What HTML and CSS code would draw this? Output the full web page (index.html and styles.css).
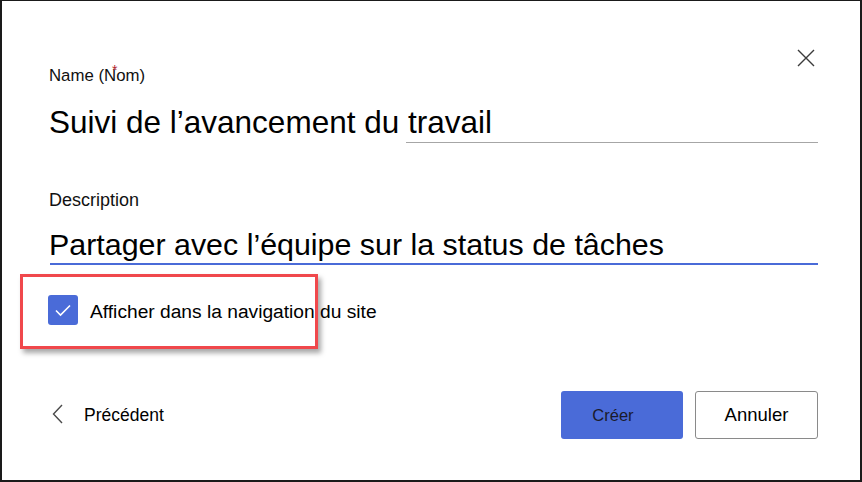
FILE: index.html
```html
<!DOCTYPE html>
<html lang="fr">
<head>
<meta charset="utf-8">
<title>Créer une liste</title>
<link rel="stylesheet" href="styles.css">
</head>
<body>
<div class="dialog">
  <button class="close" aria-label="Fermer">
    <svg width="18" height="18" viewBox="0 0 18 18"><path d="M1 1 L17 17 M17 1 L1 17" stroke="#3b3b3b" stroke-width="1.4" fill="none"/></svg>
  </button>

  <div class="field-label name-label">Name (Nom)<span class="req">*</span></div>
  <div class="field-value">Suivi de l’avancement du travail</div>
  <div class="underline-gray"></div>

  <div class="field-label desc-label">Description</div>
  <div class="field-value desc-value">Partager avec l’équipe sur la status de tâches</div>
  <div class="underline-blue"></div>

  <div class="check-row">
    <span class="checkbox">
      <svg width="30" height="30" viewBox="0 0 30 30"><path d="M8 15.5 L12.5 20 L22 10.5" stroke="#fff" stroke-width="1.6" fill="none"/></svg>
    </span>
    <span class="check-label">Afficher dans la navigation du site</span>
  </div>

  <div class="footer">
    <a class="back">
      <svg width="12" height="20" viewBox="0 0 12 20"><path d="M10 1 L1.5 10 L10 19" stroke="#4a4a4a" stroke-width="1.4" fill="none"/></svg>
      <span>Précédent</span>
    </a>
    <div class="actions">
      <button class="btn primary">Créer</button>
      <button class="btn secondary">Annuler</button>
    </div>
  </div>

  <div class="highlight"></div>
</div>
</body>
</html>
```
FILE: styles.css
```css
* { box-sizing: border-box; }
html, body { margin: 0; padding: 0; background: #fff; }
body { font-family: "Liberation Sans", Arial, sans-serif; color: #111; }

.dialog {
  position: relative;
  width: 862px;
  height: 482px;
  border-top: 1px solid #1a1a1a;
  border-left: 2px solid #1a1a1a;
  border-right: 2px solid #1a1a1a;
  border-bottom: 2px solid #1a1a1a;
  padding: 65px 42px 0 47px;
}

.close {
  position: absolute;
  top: 48px;
  right: 45px;
  border: 0;
  background: none;
  padding: 0;
  width: 18px;
  height: 18px;
  display: flex;
}

.field-label { position: relative; }
.name-label { font-size: 16.8px; line-height: 20px; display: inline-block; }
.req {
  position: absolute;
  left: 63px;
  top: -3px;
  color: #b3262c;
  font-size: 14px;
  line-height: 14px;
}

.field-value {
  margin-top: 16px;
  font-size: 31.5px;
  line-height: 40px;
  color: #000;
  white-space: nowrap;
}

.underline-gray {
  height: 1px;
  background: #a6a6a6;
  margin-left: 357px;
}

.desc-label {
  margin-top: 46px;
  font-size: 18px;
  line-height: 22px;
}

.desc-value {
  margin-top: 14px;
  font-size: 30.4px;
  line-height: 38px;
}

.underline-blue {
  height: 2px;
  background: #4a6bd8;
  margin-left: 1px;
}

.check-row {
  margin-top: 30px;
  height: 30px;
  display: flex;
  align-items: center;
  gap: 12px;
  margin-left: -1px;
}
.checkbox {
  width: 30px;
  height: 30px;
  border-radius: 3px;
  background: #4a6bd8;
  display: flex;
}
.check-label { font-size: 19.2px; color: #000; white-space: nowrap; padding-top: 3px; }

.footer {
  margin-top: 66px;
  height: 48px;
  display: flex;
  align-items: center;
  justify-content: space-between;
}
.back {
  display: flex;
  align-items: center;
  gap: 20px;
  padding-left: 3px;
  font-size: 17.5px;
  color: #000;
}
.back svg { margin-top: -3px; }
.actions { display: flex; gap: 12px; }
.btn {
  width: 122px;
  height: 48px;
  border-radius: 3px;
  font-family: "Liberation Sans", Arial, sans-serif;
  padding: 0;
}
.primary {
  background: #4a6bd8;
  border: 0;
  color: #1a1a2a;
  font-size: 16.5px;
  padding-right: 18px;
}
.secondary {
  width: 123px;
  background: #fff;
  border: 1px solid #8a8a8a;
  color: #000;
  font-size: 18.5px;
}

.highlight {
  position: absolute;
  left: 18px;
  top: 273px;
  width: 298px;
  height: 75px;
  border: 3px solid #f0484c;
  box-shadow: 3px 4px 5px rgba(0, 0, 0, 0.35);
  pointer-events: none;
}
```
